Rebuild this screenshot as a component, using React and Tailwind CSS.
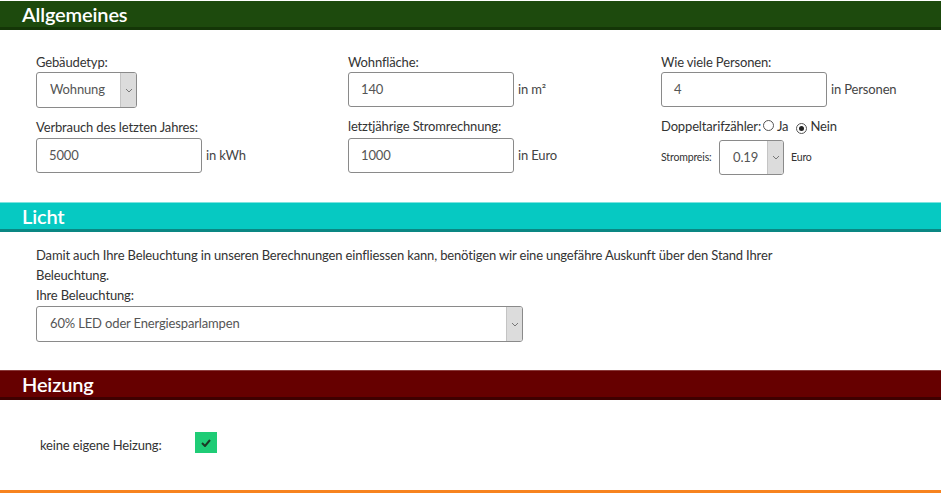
import React from "react";

const font = { fontFamily: "Lato, 'Open Sans', sans-serif" };

const Band = ({ title, color }) => (
  <div className={`h-[29px] flex items-center pl-[22px] border-b-[3px] ${color}`}>
    <h2 className="text-[20px] font-semibold text-white leading-none">{title}</h2>
  </div>
);

const TextBox = ({ value, unit, w = "w-[166px]" }) => (
  <div className="flex items-center gap-[4px]">
    <div className={`${w} h-[35px] border border-[#8a8a8a] rounded-[3px] flex items-center pl-[12px] text-[13px] text-[#555]`}>
      {value}
    </div>
    {unit && <span className="text-[13px] text-[#444]">{unit}</span>}
  </div>
);

const Chevron = () => (
  <svg width="8" height="5" viewBox="0 0 8 5" fill="none">
    <path d="M1 1l3 3 3-3" stroke="#777" strokeWidth="1" />
  </svg>
);

const SelectBox = ({ value, w, h = "h-[36px]", pl = "pl-[13px]" }) => (
  <div className={`${w} ${h} border border-[#8a8a8a] rounded-[3px] flex overflow-hidden`}>
    <div className={`flex-1 flex items-center ${pl} text-[13px] text-[#555]`}>{value}</div>
    <div className="w-[16px] bg-[#dcdcdc] border-l border-[#c4c4c4] flex items-center justify-center">
      <Chevron />
    </div>
  </div>
);

const Radio = ({ checked }) => (
  <span className="inline-flex w-[11px] h-[11px] rounded-full border border-[#555] items-center justify-center">
    {checked && <span className="w-[5px] h-[5px] rounded-full bg-[#222]" />}
  </span>
);

export default function App() {
  return (
    <div className="w-[941px] h-[493px] bg-white overflow-hidden flex flex-col tracking-[-0.15px]" style={font}>
      <div className="pt-[1px]">
        <Band title="Allgemeines" color="bg-[#1d4a0d] border-[#143607]" />
      </div>

      {/* Allgemeines */}
      <div className="grid grid-cols-[312px_313px_1fr] pl-[36px] pt-[24px] text-[13px] text-[#333]">
        <div className="flex flex-col">
          <span className="leading-[16px] mb-[2px]">Gebäudetyp:</span>
          <SelectBox value="Wohnung" w="w-[101px]" />
          <span className="leading-[16px] mt-[11px] mb-[3px]">Verbrauch des letzten Jahres:</span>
          <TextBox value="5000" unit="in kWh" />
        </div>
        <div className="flex flex-col">
          <span className="leading-[16px] mb-[2px]">Wohnfläche:</span>
          <TextBox value="140" unit="in m²" />
          <span className="leading-[16px] mt-[11px] mb-[4px]">letztjährige Stromrechnung:</span>
          <TextBox value="1000" unit="in Euro" />
        </div>
        <div className="flex flex-col">
          <span className="leading-[16px] mb-[2px]">Wie viele Personen:</span>
          <TextBox value="4" unit="in Personen" />
          <div className="flex items-center mt-[12px] h-[16px]">
            <span>Doppeltarifzähler:</span>
            <span className="ml-[2px] mr-[3px]"><Radio /></span>
            <span>Ja</span>
            <span className="ml-[8px] mr-[3px]"><Radio checked /></span>
            <span>Nein</span>
          </div>
          <div className="flex items-center mt-[5px]">
            <span className="text-[10.5px] w-[58px]">Strompreis:</span>
            <SelectBox value="0.19" w="w-[65px]" h="h-[35px]" pl="pl-[13px]" />
            <span className="text-[10.5px] ml-[7px]">Euro</span>
          </div>
        </div>
      </div>

      <div className="mt-[27px]">
        <div className="border-t border-[#7ee3df]">
          <Band title="Licht" color="bg-[#06c9c2] border-[#0a8783]" />
        </div>
      </div>

      <div className="pl-[36px] pt-[13px] text-[13px] text-[#333]">
        <p className="leading-[20px] w-[760px]">
          Damit auch Ihre Beleuchtung in unseren Berechnungen einfliessen kann, benötigen wir eine ungefähre Auskunft über den Stand Ihrer Beleuchtung.
        </p>
        <p className="leading-[20px] mb-[1px]">Ihre Beleuchtung:</p>
        <SelectBox value="60% LED oder Energiesparlampen" w="w-[487px]" />
      </div>

      <div className="mt-[28px]">
        <div className="border-t border-[#8a3a3a]">
          <Band title="Heizung" color="bg-[#660000] border-[#3f0000]" />
        </div>
      </div>

      <div className="flex items-center pl-[40px] pt-[30px] text-[13px] text-[#333]">
        <span className="w-[155px] mt-[6px]">keine eigene Heizung:</span>
        <span className="w-[22px] h-[21px] bg-[#1fcc76] flex items-center justify-center">
          <svg width="10" height="8" viewBox="0 0 10 8" fill="none">
            <path d="M1 4l3 3 5-6" stroke="#1b3a24" strokeWidth="2" />
          </svg>
        </span>
      </div>

      <div className="mt-auto h-[3px] bg-[#f7831f]" />
    </div>
  );
}
